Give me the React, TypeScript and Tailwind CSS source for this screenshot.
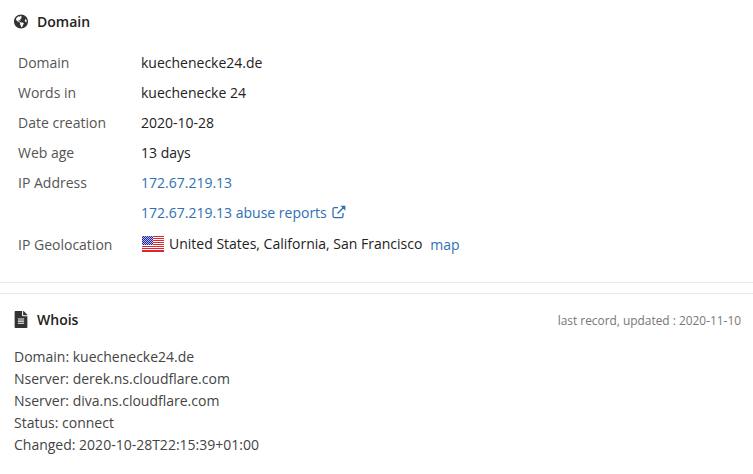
import { FaGlobeAmericas, FaFileAlt } from "react-icons/fa";

const font = { fontFamily: '"Open Sans", sans-serif' };

function ExtIcon() {
  return (
    <svg width="14" height="14" viewBox="0 0 14 14" fill="none" stroke="currentColor" strokeWidth="1.3" className="ml-[5px]">
      <path d="M11 8v3a1.6 1.6 0 0 1-1.6 1.6H2.6A1.6 1.6 0 0 1 1 11V4.2a1.6 1.6 0 0 1 1.6-1.6H6" />
      <path d="M5.5 8.5 12 2" strokeWidth="1.5" />
      <path d="M8.4 0.8h5v5z" fill="currentColor" stroke="none" />
    </svg>
  );
}

function Flag() {
  return (
    <svg width="22" height="16" viewBox="0 0 22 16" shapeRendering="crispEdges" className="ml-[1px] shrink-0">
      <rect width="22" height="16" fill="#fff" />
      {[0, 2, 4, 6, 8, 10, 12, 14].map((y) => (
        <rect key={y} y={y} width="22" height="1" fill="#e0252c" />
      ))}
      <rect y="15" width="22" height="1" fill="#e0252c" />
      <rect width="11" height="9" fill="#20259a" />
      <rect width="11" height="9" fill="url(#dots)" />
      <defs>
        <pattern id="dots" width="2" height="2" patternUnits="userSpaceOnUse">
          <rect width="1" height="1" fill="#b9bdf0" />
          <rect x="1" y="1" width="1" height="1" fill="#b9bdf0" />
        </pattern>
      </defs>
    </svg>
  );
}

function Row({ label, children }: { label?: string; children: React.ReactNode }) {
  return (
    <div className="flex h-[30px] items-center">
      <div className="w-[123px] shrink-0 text-[#555]">{label}</div>
      <div className="flex items-center text-[#222]">{children}</div>
    </div>
  );
}

export default function App() {
  return (
    <div className="h-[474px] w-[753px] overflow-hidden bg-white text-[14px]" style={font}>
      <section className="h-[283px] border-b border-[#e9e9e9] px-[14px] pt-[11px]">
        <div className="flex h-[20px] items-center gap-[9px] font-semibold text-[#222]">
          <span className="flex w-[14px] justify-center">
            <FaGlobeAmericas className="text-[15px] text-[#333]" />
          </span>
          <span>Domain</span>
        </div>
        <div className="mt-[16px] pl-[4px]">
          <Row label="Domain">kuechenecke24.de</Row>
          <Row label="Words in">kuechenecke 24</Row>
          <Row label="Date creation">2020-10-28</Row>
          <Row label="Web age">13 days</Row>
          <Row label="IP Address">
            <a className="text-[#2f6fb3]">172.67.219.13</a>
          </Row>
          <Row>
            <a className="flex items-center text-[#2f6fb3]">
              172.67.219.13 abuse reports
              <ExtIcon />
            </a>
          </Row>
          <div className="flex h-[34px] items-center">
            <div className="w-[123px] shrink-0 text-[#555]">IP Geolocation</div>
            <div className="flex items-center text-[#222]">
              <Flag />
              <span className="ml-[5px] -translate-y-px">United States, California, San Francisco</span>
              <a className="ml-[8px] text-[#2f6fb3]">map</a>
            </div>
          </div>
        </div>
      </section>
      <section className="mt-[10px] border-t border-[#e9e9e9] pl-[14px] pr-[12px] pt-[15px]">
        <div className="flex h-[20px] items-center justify-between">
          <div className="flex items-center gap-[9px] font-semibold text-[#222]">
            <span className="flex w-[14px] justify-center">
              <FaFileAlt className="text-[17px] text-[#333]" />
            </span>
            <span>Whois</span>
          </div>
          <span className="mt-[4px] text-[11.9px] text-[#777]">last record, updated : 2020-11-10</span>
        </div>
        <div className="mt-[17px] leading-[22px] text-[#444]">
          <div>Domain: kuechenecke24.de</div>
          <div>Nserver: derek.ns.cloudflare.com</div>
          <div>Nserver: diva.ns.cloudflare.com</div>
          <div>Status: connect</div>
          <div>Changed: 2020-10-28T22:15:39+01:00</div>
        </div>
      </section>
    </div>
  );
}
